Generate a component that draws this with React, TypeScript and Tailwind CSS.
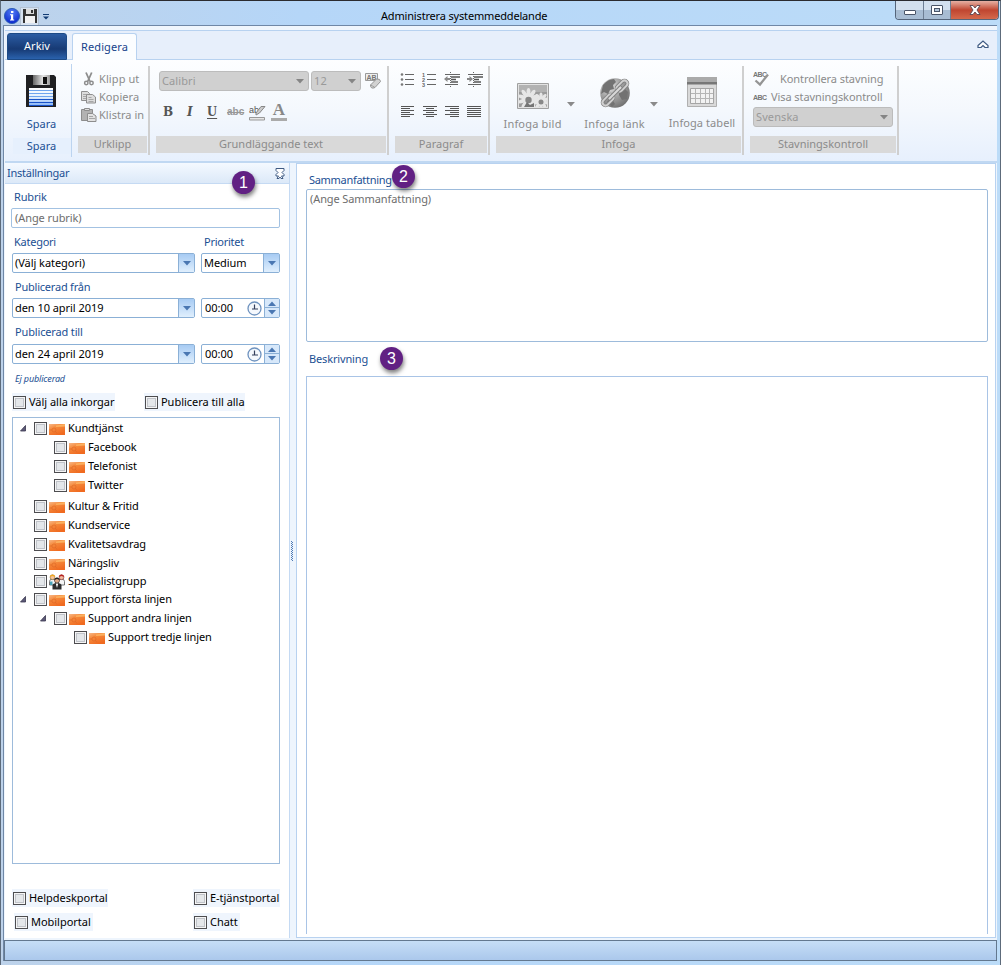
import React from 'react';
import clsx from 'clsx';

const FloppyIcon = ({ className }: { className: string }) => (
  <svg viewBox="0 0 30 32" className={className}>
    <defs>
      <linearGradient id="paper" x1="0" y1="0" x2="0" y2="1">
        <stop offset="0" stopColor="#fff" />
        <stop offset="0.5" stopColor="#e4effd" />
        <stop offset="1" stopColor="#7fb0f5" />
      </linearGradient>
      <linearGradient id="shutter" x1="0" x2="1">
        <stop offset="0" stopColor="#666" />
        <stop offset="0.6" stopColor="#e8e8e8" />
        <stop offset="1" stopColor="#999" />
      </linearGradient>
    </defs>
    <path d="M0 0h28l2 2v30H0z" fill="#202022" />
    <path d="M7 0h17v10H7z" fill="url(#shutter)" />
    <path d="M17 2h4v7h-4z" fill="#111" />
    <path d="M3 13h24v18H3z" fill="url(#paper)" />
    <path d="M3 15.500h24M3 18.500h24M3 21.500h24" stroke="#6fa4ee" />
    <path d="M3 24.500h24M3 27.500h24M3 30.500h24" stroke="#1953c9" />
  </svg>
);

const FloppySmall = () => (
  <svg viewBox="0 0 14 14" className="h-[14px] w-[14px]">
    <path d="M0 0h14v14H0z" fill="#333" />
    <path d="M3 0h8v5H3z" fill="#ddd" />
    <path d="M8 1h2v3H8z" fill="#333" />
    <path d="M2 7h10v7H2z" fill="#f2f2f2" />
  </svg>
);

const InfoIcon = () => (
  <svg viewBox="0 0 16 16" className="h-4 w-4">
    <defs>
      <radialGradient id="info" cx="0.5" cy="0.25" r="0.8">
        <stop offset="0" stopColor="#4f7cf5" />
        <stop offset="1" stopColor="#0620c9" />
      </radialGradient>
    </defs>
    <circle cx="8" cy="8" r="7.6" fill="url(#info)" stroke="#3161b8" />
    <path d="M7 3h2.4v2H7zM6 6.3h3.2v5.3h1v1H6v-1h1V7.3H6z" fill="#fff" />
  </svg>
);

const ScissorsIcon = () => (
  <svg viewBox="0 0 12 14" className="h-[14px] w-3" fill="none" stroke="#8d8d8d">
    <path d="M3 0.500l4 9M8.700 0.500L4.700 9.500" strokeWidth="1.800" />
    <circle cx="3.300" cy="11" r="1.700" strokeWidth="1.500" />
    <circle cx="8.500" cy="11" r="1.700" strokeWidth="1.500" />
  </svg>
);

const CopyIcon = () => (
  <svg viewBox="0 0 16 14" className="h-[14px] w-4" fill="#dcdcdc" stroke="#8f8f8f">
    <path d="M0.500 1.500h6l2 2v7h-8z" />
    <path d="M2 4.500h4M2 6.500h4M2 8.500h4" strokeWidth="0.700" />
    <path d="M5.500 4.500h6l3 2.500v6h-9z" />
    <path d="M7.500 7.500h3M7.500 9.500h5M7.500 11.500h5" strokeWidth="0.700" />
  </svg>
);

const PasteIcon = () => (
  <svg viewBox="0 0 16 14" className="h-[14px] w-4" fill="#b2b2b2" stroke="#8d8d8d">
    <path d="M0.500 1.500h11v11h-11z" />
    <path d="M3.500 0.500h5v2h-5z" fill="#ddd" />
    <path d="M6.500 5.500h5l3.500 2.500v5.500h-8.500z" fill="#e2e2e2" />
    <path d="M8 8.500h4M8 10.500h6" strokeWidth="0.700" />
  </svg>
);

const Arrow = ({ className }: { className?: string }) => (
  <svg viewBox="0 0 8 5" className={clsx('h-[5px] w-2', className)}>
    <path d="M0 0h8L4 4.600z" fill="currentColor" />
  </svg>
);

const ClearFormatIcon = () => (
  <svg viewBox="0 0 16 17" className="h-[17px] w-4">
    <path d="M0.500 0.500h12v7h-12z" fill="#eee" stroke="#9a9a9a" />
    <text x="1.500" y="6.500" fontSize="7" fontWeight="bold" fill="#777" textLength="10" fontFamily="Liberation Sans">AB</text>
    <path d="M5.500 12l6-6q4-0.500 4 2.500l-5.500 6q-4.500 2-4.500-2.500z" fill="#d2d2d2" stroke="#959595" />
    <path d="M5.500 12l4 2" stroke="#959595" strokeWidth="0.800" />
  </svg>
);

const HighlightIcon = () => (
  <svg viewBox="0 0 17 17" className="h-[17px] w-[17px] overflow-visible">
    <text x="0" y="8.500" fontSize="9" fill="#555" fontFamily="Liberation Sans">ab</text>
    <path d="M7 9l5-6.500h4L10.500 9 7 11z" fill="#ccc" stroke="#888" />
    <path d="M0.500 13.500h15v2.500h-15z" fill="#e6e6e6" stroke="#999" />
  </svg>
);

const bulletRows = [3, 8, 13];

const ListIcon = ({ numbered }: { numbered?: boolean }) => (
  <svg viewBox="0 0 15 16" className="h-4 w-[15px]">
    {bulletRows.map((y, i) => (
      <g key={y}>
        {numbered ? (
          <text x="0" y={y + 1.5} fontSize="5.500" fontWeight="bold" fill="#666" fontFamily="Liberation Sans">{i + 1}</text>
        ) : (
          <circle cx="2" cy={y - 0.5} r="1.300" fill="#777" />
        )}
        <path d={`M5 ${y - 0.5}h9`} stroke="#666" />
      </g>
    ))}
  </svg>
);

const IndentIcon = ({ right }: { right?: boolean }) => (
  <svg viewBox="0 0 16 16" className="h-4 w-4">
    <path d="M1 2.500h15M1 12.500h5M7 12.500h7" stroke="#666" />
    <path d="M7 5h9M7 7.500h5M7 10h7" stroke="#555" strokeWidth="1.400" />
    <path d="M6.500 0v15" stroke="#666" strokeDasharray="1 1" />
    <path d={right ? 'M6 7L2.500 4v2H0v2h2.500v2z' : 'M0 7l3.500-3v2H6v2H3.500v2z'} fill="#888" />
  </svg>
);

const alignPaths = {
  left: 'M0 1.500h13M0 3.500h9M0 5.500h13M0 7.500h9M0 9.500h13M0 11.500h9',
  center: 'M0 1.500h14M3 3.500h8M0 5.500h14M3 7.500h8M0 9.500h14M3 11.500h8',
  right: 'M0 1.500h14M5 3.500h9M0 5.500h14M5 7.500h9M0 9.500h14M5 11.500h9',
  justify: 'M0 1.500h14M0 3.500h14M0 5.500h14M0 7.500h14M0 9.500h14M0 11.500h14',
};

const AlignIcon = ({ type }: { type: keyof typeof alignPaths }) => (
  <svg viewBox="0 0 14 13" className="h-[13px] w-[14px]">
    <path d={alignPaths[type]} stroke="#555" />
  </svg>
);

const petals = [0, 36, 72, 108, 144, 180, 216, 252, 288, 324];

const PictureIcon = () => (
  <svg viewBox="0 0 32 27" className="h-[27px] w-8">
    <path d="M0.500 0.500h31v25h-31z" fill="#e2e2e2" stroke="#a0a0a0" />
    <svg x="2" y="2" width="28" height="22" viewBox="2 2 28 22">
      <path d="M2 2h28v22H2z" fill="#9b9b9b" />
      <path d="M2 2h28v7H2z" fill="#b2b2b2" />
      <g fill="#e6e6e6">
        {petals.map((a) => (
          <ellipse key={a} cx="11.500" cy="10" rx="2" ry="5" transform={`rotate(${a} 11.500 16)`} />
        ))}
        {petals.map((a) => (
          <ellipse key={a} cx="24" cy="13.500" rx="1.700" ry="4" transform={`rotate(${a} 24 18)`} />
        ))}
      </g>
      <circle cx="11.500" cy="17" r="3.200" fill="#858585" />
      <circle cx="24" cy="19" r="2.500" fill="#888" />
      <path d="M7 24l3-5 3 3 4-2v4z" fill="#757575" />
    </svg>
  </svg>
);

const GlobeLinkIcon = () => (
  <svg viewBox="0 0 32 32" className="h-8 w-8">
    <defs>
      <radialGradient id="globe" cx="0.35" cy="0.3" r="0.8">
        <stop offset="0" stopColor="#ddd" />
        <stop offset="0.5" stopColor="#a0a0a0" />
        <stop offset="1" stopColor="#6a6a6a" />
      </radialGradient>
    </defs>
    <circle cx="16" cy="16" r="14.800" fill="url(#globe)" />
    <path d="M4 8q5-6 11-6l2 3-3 3 1 4-4 1-2 4-4-2-3 2zM20 14l5-3 4 4-1 7-5 1-3-5zM8 24l5-2 3 5-3 3z" fill="#727272" />
    <g fill="none" strokeLinecap="round">
      <rect x="16.500" y="6" width="13" height="6" rx="3" stroke="#808080" strokeWidth="3.600" transform="rotate(-45 23 9)" />
      <rect x="2.500" y="20" width="13" height="6" rx="3" stroke="#808080" strokeWidth="3.600" transform="rotate(-45 9 23)" />
      <rect x="16.500" y="6" width="13" height="6" rx="3" stroke="#d0d0d0" strokeWidth="2" transform="rotate(-45 23 9)" />
      <rect x="2.500" y="20" width="13" height="6" rx="3" stroke="#d0d0d0" strokeWidth="2" transform="rotate(-45 9 23)" />
      <path d="M10.500 21.500l11-11" stroke="#808080" strokeWidth="4" />
      <path d="M10.500 21.500l11-11" stroke="#d8d8d8" strokeWidth="2.200" />
    </g>
  </svg>
);

const TableIcon = () => (
  <svg viewBox="0 0 30 31" className="h-[31px] w-[30px]">
    <path d="M0.500 0.500h29v29h-29z" fill="#d9d9d9" stroke="#b0b0b0" />
    <path d="M0 0h30v5H0z" fill="#aaa" />
    <path d="M0 5h30v2.500H0z" fill="#777" />
    <path d="M3.500 11.500h23v15h-23z" fill="#f2f2f2" stroke="#a5a5a5" />
    <path d="M4 16.500h22M4 21.500h22M8.500 12v14M13.500 12v14M18.500 12v14M22.500 12v14" stroke="#b5b5b5" />
  </svg>
);

const SpellIcon = ({ check }: { check?: boolean }) => (
  <svg viewBox="0 0 18 16" className="h-4 w-[18px]">
    <text x="0" y={check ? 6 : 11} fontSize="7" fontWeight="bold" fill="#777" textLength="14" fontFamily="Liberation Sans">ABC</text>
    {check && <path d="M2.500 9.500l4.500 4L15 3.500" stroke="#949494" strokeWidth="2.300" fill="none" />}
  </svg>
);

const FolderIcon = () => (
  <svg viewBox="0 0 16 12" className="h-3 w-4">
    <defs>
      <linearGradient id="folder" x1="0" y1="0" x2="0.6" y2="1">
        <stop offset="0" stopColor="#f8b888" />
        <stop offset="0.4" stopColor="#f58a3c" />
        <stop offset="1" stopColor="#f06a20" />
      </linearGradient>
    </defs>
    <path d="M0 1h16v11H0z" fill="url(#folder)" />
    <path d="M7 2.500L16 1v2.500L7 4z" fill="#fbb060" />
    <circle cx="5" cy="7" r="2" fill="none" stroke="#dc6426" strokeWidth="0.600" />
    <path d="M0.500 7h2.500M6.500 8.500l1.500 2" stroke="#dc6426" strokeWidth="0.600" />
  </svg>
);

const GroupIcon = () => (
  <svg viewBox="0 0 16 16" className="h-4 w-4">
    <path d="M0.500 11V7.500q0-2.500 3-2.500t3 2.500V11zM9.500 11V7.500q0-2.500 3-2.500t3 2.500V11z" fill="#f6f6f6" stroke="#555" strokeWidth="0.800" />
    <path d="M1 7.500h2.500V11H1z" fill="#4ba3b8" />
    <circle cx="3.500" cy="3.200" r="2.400" fill="#f4c49c" stroke="#8a6a30" strokeWidth="0.600" />
    <path d="M0.800 3Q1 0.500 3.500 0.500T6.200 3L3.500 2z" fill="#f2a81d" />
    <circle cx="12.500" cy="3.200" r="2.400" fill="#f0b8a0" stroke="#8a2a20" strokeWidth="0.600" />
    <path d="M9.800 3Q10 0.500 12.500 0.500T15.200 3l-2.700-1z" fill="#b82222" />
    <path d="M3.500 15.500v-4q0-2.500 4.500-2.500t4.500 2.500v4z" fill="#2c2c2c" />
    <path d="M6.800 9.500h2.400L8 14z" fill="#fff" />
    <circle cx="8" cy="6.500" r="2.500" fill="#e0a884" stroke="#222" strokeWidth="0.600" />
    <path d="M5.300 6Q5.500 3.500 8 3.500t2.700 2.500L8 5z" fill="#222" />
  </svg>
);

const ClockIcon = () => (
  <svg viewBox="0 0 15 15" className="h-[15px] w-[15px]">
    <circle cx="7.500" cy="7.500" r="6.500" fill="#f4f8fd" stroke="#6f93bf" strokeWidth="1.300" />
    <path d="M7.500 3.500v4.500M5 8h6" stroke="#333f5c" strokeWidth="1.200" fill="none" />
  </svg>
);

const Separator = () => <div className="mt-[6px] h-[89px] w-[2px] shrink-0 bg-[#cfcfcf]" />;

const Caption = ({ children }: { children: React.ReactNode }) => (
  <div className="mt-auto mb-[8px] flex h-[17px] items-center justify-center bg-[#d9d9d9] text-[11px] text-[#8b8b8b]">
    {children}
  </div>
);

const RibbonSelect = ({ children, className }: { children: React.ReactNode; className: string }) => (
  <div className={clsx('flex h-5 items-center justify-between rounded-[3px] border border-[#bcbcbc] bg-[#d0d0d0] pr-1 pl-[2px] text-[11px] tracking-[0.1px] text-[#999]', className)}>
    <span>{children}</span>
    <Arrow className="text-[#858585]" />
  </div>
);

const Label = ({ children, className }: { children: React.ReactNode; className?: string }) => (
  <div className={clsx('text-[11px] leading-4 text-[#1b4f93]', className)}>{children}</div>
);

const Select = ({ value, className }: { value: string; className: string }) => (
  <div className={clsx('flex h-5 items-center justify-between rounded-[2px] border border-[#8bb0d6] bg-white pl-[2px] text-[11px] tracking-[-0.05px] text-black', className)}>
    <span>{value}</span>
    <div className="flex h-full w-4 items-center justify-center border-l border-[#8bb0d6] bg-linear-to-b from-[#a7cbf3] to-[#e0effd]">
      <Arrow className="text-[#4a77b2]" />
    </div>
  </div>
);

const TimeField = () => (
  <div className="flex h-5 w-[79px] items-center rounded-[2px] border border-[#8bb0d6] bg-white pl-[3px] text-[11px] text-black">
    <span>00:00</span>
    <div className="ml-auto flex h-full items-center">
      <ClockIcon />
      <div className="ml-[2px] flex h-full w-[15px] flex-col border-l border-[#8bb0d6] bg-[#d7e8fa]">
        <div className="flex h-[9px] items-center justify-center border-b border-[#8bb0d6]">
          <Arrow className="rotate-180 text-[#4a77b2]" />
        </div>
        <div className="flex h-[9px] items-center justify-center">
          <Arrow className="text-[#4a77b2]" />
        </div>
      </div>
    </div>
  </div>
);

const Box = () => (
  <span className="flex h-[13px] w-[13px] shrink-0 items-center justify-center border border-[#4d4d50] bg-[#f5f5f5]">
    <span className="h-[9px] w-[9px] border border-[#c0c3c9] bg-[#e4e7ea]" />
  </span>
);

const Check = ({ label, className }: { label: string; className?: string }) => (
  <div className={clsx('flex h-[18px] items-center gap-[3px] bg-[#eff5fd] pl-px text-[11px] tracking-[-0.03px] text-black', className)}>
    <Box />
    <span className="whitespace-nowrap">{label}</span>
  </div>
);

interface TreeItem {
  label: string;
  level: number;
  open?: boolean;
  group?: boolean;
  height: string;
}

const tree: TreeItem[] = [
  { label: 'Kundtjänst', level: 0, open: true, height: 'h-[19px]' },
  { label: 'Facebook', level: 1, height: 'h-[19px]' },
  { label: 'Telefonist', level: 1, height: 'h-[19px]' },
  { label: 'Twitter', level: 1, height: 'h-[21px]' },
  { label: 'Kultur & Fritid', level: 0, height: 'h-[19px]' },
  { label: 'Kundservice', level: 0, height: 'h-[19px]' },
  { label: 'Kvalitetsavdrag', level: 0, height: 'h-[19px]' },
  { label: 'Näringsliv', level: 0, height: 'h-[18px]' },
  { label: 'Specialistgrupp', level: 0, group: true, height: 'h-[18px]' },
  { label: 'Support första linjen', level: 0, open: true, height: 'h-[19px]' },
  { label: 'Support andra linjen', level: 1, open: true, height: 'h-[19px]' },
  { label: 'Support tredje linjen', level: 2, height: 'h-[19px]' },
];

const indents = ['pl-[7px]', 'pl-[27px]', 'pl-[47px]'];

const TreeRow = ({ item }: { item: TreeItem }) => (
  <div className={clsx('flex items-start', item.height, indents[item.level])}>
    <div className="flex h-[19px] items-center">
      <svg viewBox="0 0 14 8" className="-mt-[2px] h-2 w-[14px]">
        {item.open && <path d="M0.500 7h5V1.500z" fill="#5d5a78" stroke="#38364e" strokeWidth="0.800" />}
      </svg>
      <Box />
      <span className="ml-[2px] flex w-4">{item.group ? <GroupIcon /> : <FolderIcon />}</span>
      <span className="-mt-[2px] ml-[3px] text-[11px] leading-[18px] tracking-[-0.1px] whitespace-nowrap">{item.label}</span>
    </div>
  </div>
);

const Badge = ({ n, className }: { n: number; className: string }) => (
  <div className={clsx('absolute flex h-[23px] w-[23px] items-center justify-center rounded-full bg-[#612083] font-["Liberation_Sans"] text-[16px] leading-none text-white shadow-[1px_3px_4px_rgba(0,0,0,0.5)]', className)}>
    {n}
  </div>
);

const TitleBar = () => (
  <div className="flex h-6 shrink-0 items-start">
    <div className="mt-[5px] flex h-5 items-center">
      <InfoIcon />
      <div className="flex h-[19px] w-[19px] items-center justify-center border border-[#b5c3d4] bg-[#d6e2f0]">
        <FloppySmall />
      </div>
      <svg viewBox="0 0 6 6" className="mt-[2px] ml-1 h-[6px] w-[6px]">
        <path d="M0 0.500h6" stroke="#123c74" />
        <path d="M0 2.500h6L3 5.500z" fill="#123c74" />
      </svg>
    </div>
    <div className="flex-1 pt-[7px] pl-[332px] text-[11px] leading-4 tracking-[-0.17px] text-black">Administrera systemmeddelande</div>
    <div className="-mr-[2px] flex h-[19px] overflow-hidden rounded-b-[4px] border border-t-0 border-[#55657a]">
      <div className="flex w-[28px] items-center justify-center border-r border-[#6e7f94] bg-linear-to-b from-[#d3e0ee] from-50% to-[#a8bdd3] to-50%">
        <div className="mt-[5px] h-[5px] w-3 rounded-[1px] border border-[#4a5568] bg-white" />
      </div>
      <div className="flex w-[27px] items-center justify-center border-r border-[#6e7f94] bg-linear-to-b from-[#d3e0ee] from-50% to-[#a8bdd3] to-50%">
        <div className="flex h-[10px] w-3 items-center justify-center rounded-[1px] border border-[#4a5568] bg-white">
          <div className="h-1 w-[6px] border border-[#4a5568] bg-[#b4c7da]" />
        </div>
      </div>
      <div className="flex w-[47px] items-center justify-center bg-linear-to-b from-[#e5b0a4] from-0% via-[#bf4530] via-50% to-[#d4694c]">
        <svg viewBox="0 0 12 10" className="h-[10px] w-3">
          <path d="M1 0.500h3l2 2.500 2-2.500h3L8 5l3 4.500H8L6 7 4 9.500H1L4 5z" fill="#fff" stroke="#5a4650" strokeWidth="0.900" />
        </svg>
      </div>
    </div>
  </div>
);

const Tabs = () => (
  <div className="flex h-[29px] shrink-0 items-end border-b border-[#b8d2f0] bg-[#e7effb] pl-[2px]">
    <div className="-mb-px flex h-[27px] w-[60px] items-center justify-center rounded-t-[3px] border border-[#1c4a86] bg-linear-to-b from-[#2b5ca3] via-[#173a74] via-60% to-[#2a62ad] text-[11px] text-white">
      Arkiv
    </div>
    <div className="-mb-px ml-[5px] flex h-[27px] w-[65px] items-center justify-center rounded-t-[3px] border border-b-0 border-[#b8d2f0] bg-[#fbfdff] text-[11px] tracking-[0.1px] text-[#15428b]">
      Redigera
    </div>
    <svg viewBox="0 0 12 8" className="mr-2 mb-[11px] ml-auto h-2 w-3">
      <path d="M1 5.500L6 1l5 4.500v2H8L6 5.500 4 7.500H1z" fill="#fff" stroke="#3f5a82" strokeWidth="1.200" />
    </svg>
  </div>
);

const Ribbon = () => (
  <div className="flex h-[103px] shrink-0 border-b-2 border-[#c0d8f2] bg-linear-to-b from-[#fdfeff] via-[#f4f8fd] via-50% to-[#e7f0fd] text-[11px] text-[#8b8b8b]">
    <div className="flex w-[66px] flex-col items-center text-[#1b4f93]">
      <FloppyIcon className="mt-[15px] ml-[6px] h-8 w-[30px]" />
      <span className="mt-[9px] ml-[7px] leading-4">Spara</span>
      <div className="mt-auto mb-[7px] ml-[7px] flex h-4 w-[58px] items-center justify-center bg-[#e6f0fd]">Spara</div>
    </div>
    <div className="mt-1 h-[93px] w-px shrink-0 bg-[#bcd4f0]" />

    <div className="flex w-[76px] flex-col pr-px pl-[6px]">
      <div className="mt-[10px] flex h-[54px] flex-col pl-[3px]">
        <div className="flex h-[18px] items-center gap-1 pl-[2px] tracking-[0.1px]"><ScissorsIcon /><span>Klipp ut</span></div>
        <div className="flex h-[18px] items-center gap-[2px] tracking-[0.05px]"><CopyIcon /><span>Kopiera</span></div>
        <div className="flex h-[18px] items-center gap-[2px] tracking-[0.05px] whitespace-nowrap"><PasteIcon /><span>Klistra in</span></div>
      </div>
      <Caption>Urklipp</Caption>
    </div>
    <Separator />

    <div className="flex w-[237px] flex-col pr-px pl-[6px]">
      <div className="mt-[11px] flex pl-[3px]">
        <RibbonSelect className="w-[150px]">Calibri</RibbonSelect>
        <RibbonSelect className="ml-[2px] w-[50px]">12</RibbonSelect>
        <div className="ml-1 pt-[2px]"><ClearFormatIcon /></div>
      </div>
      <div className="mt-3 flex h-[18px] items-center pl-[7px] font-['Liberation_Serif'] text-[15px] leading-none text-[#555]">
        <span className="w-[22px] font-['DejaVu_Serif'] text-[12px] font-bold">B</span>
        <span className="w-[22px] pl-[2px] font-['DejaVu_Serif'] text-[12px] font-bold italic">I</span>
        <span className="w-[20px] text-[14px] font-bold underline underline-offset-2">U</span>
        <span className="w-[22px] font-['Liberation_Sans'] text-[10px] font-bold text-[#999] line-through">abc</span>
        <span className="w-[22px]"><HighlightIcon /></span>
        <span className="flex h-[18px] w-4 items-end justify-center border-b-[3px] border-[#aaa] text-[17px] leading-[17px] font-bold text-[#888]">A</span>
      </div>
      <Caption>Grundläggande text</Caption>
    </div>
    <Separator />

    <div className="flex w-[99px] flex-col pr-px pl-[6px]">
      <div className="mt-[12px] flex gap-[7px] pl-[5px]">
        <ListIcon />
        <ListIcon numbered />
        <IndentIcon />
        <IndentIcon right />
      </div>
      <div className="mt-[17px] flex gap-2 pl-[6px]">
        <AlignIcon type="left" />
        <AlignIcon type="center" />
        <AlignIcon type="right" />
        <AlignIcon type="justify" />
      </div>
      <Caption>Paragraf</Caption>
    </div>
    <Separator />

    <div className="flex w-[252px] flex-col pr-px pl-[6px]">
      <div className="flex h-[76px] tracking-[0.2px] whitespace-nowrap">
        <div className="mt-[23px] flex w-[73px] flex-col items-center pl-px">
          <PictureIcon />
          <span className="mt-[6px] leading-4">Infoga bild</span>
        </div>
        <Arrow className="mt-[42px] -ml-px text-[#8a8a8a]" />
        <div className="mt-[17px] flex w-[76px] flex-col items-center pl-[4px]">
          <GlobeLinkIcon />
          <span className="mt-[7px] leading-4">Infoga länk</span>
        </div>
        <Arrow className="mt-[42px] text-[#8a8a8a]" />
        <div className="mt-[17px] flex w-[84px] flex-col items-center pl-[5px]">
          <TableIcon />
          <span className="mt-[7px] leading-4 tracking-[0.08px]">Infoga tabell</span>
        </div>
      </div>
      <Caption>Infoga</Caption>
    </div>
    <Separator />

    <div className="flex w-[153px] flex-col pr-px pl-[6px]">
      <div className="mt-[10px] ml-[3px] flex h-[18px] items-center gap-[9px] tracking-[-0.06px] whitespace-nowrap"><SpellIcon check /><span>Kontrollera stavning</span></div>
      <div className="ml-[3px] flex h-[18px] items-center tracking-[-0.08px] whitespace-nowrap"><SpellIcon /><span>Visa stavningskontroll</span></div>
      <RibbonSelect className="mt-px ml-[3px] w-[140px]">Svenska</RibbonSelect>
      <Caption>Stavningskontroll</Caption>
    </div>
    <Separator />
  </div>
);

const SettingsPanel = () => (
  <div className="relative flex w-[285px] shrink-0 flex-col border-r border-[#c5daf3] bg-white">
    <div className="flex h-[21px] shrink-0 items-center justify-between border-b border-[#c5daf3] bg-linear-to-b from-[#f4f9ff] to-[#dce9f8] pr-[4px] pl-[2px] text-[11px] tracking-[-0.25px] text-[#1b4f93]">
      <span>Inställningar</span>
      <svg viewBox="0 0 10 11" className="h-[11px] w-[10px]" fill="#fff" stroke="#3f5a82">
        <path d="M1 0.500h8v2L7 4.500l2 2V8H6.500L8 10.500H6L5 9l-1 1.500H2L3.500 8H1V6.500l2-2-2-2z" />
      </svg>
    </div>
    <Badge n={1} className="top-[8px] left-[227px]" />

    <div className="flex flex-1 flex-col pr-[9px] pl-[7px]">
      <Label className="mt-[5px] ml-[2px] tracking-[-0.15px]">Rubrik</Label>
      <div className="mt-[3px] -ml-px flex h-5 items-center rounded-[2px] border border-[#a3c2e2] pl-[3px] text-[11px] tracking-[-0.08px] text-[#6d6d6d]">
        (Ange rubrik)
      </div>
      <div className="mt-[6px] flex pl-[2px] tracking-[-0.25px]">
        <Label className="w-[190px]">Kategori</Label>
        <Label>Prioritet</Label>
      </div>
      <div className="mt-[3px] flex justify-between">
        <Select value="(Välj kategori)" className="w-[183px]" />
        <Select value="Medium" className="w-[79px]" />
      </div>
      <Label className="mt-[6px] ml-[3px] tracking-[-0.22px]">Publicerad från</Label>
      <div className="mt-[3px] flex justify-between">
        <Select value="den 10 april 2019" className="w-[183px]" />
        <TimeField />
      </div>
      <Label className="mt-[6px] ml-[3px] tracking-[-0.15px]">Publicerad till</Label>
      <div className="mt-1 flex justify-between">
        <Select value="den 24 april 2019" className="w-[183px]" />
        <TimeField />
      </div>
      <div className="mt-[7px] ml-[3px] text-[9px] leading-4 tracking-[-0.15px] text-[#1b4f93] italic">Ej publicerad</div>
      <div className="mt-[6px] flex">
        <Check label="Välj alla inkorgar" className="w-[103px]" />
        <Check label="Publicera till alla" className="ml-[29px] w-[101px]" />
      </div>
      <div className="mt-[6px] h-[447px] border border-[#9dbbdb] pt-px">
        {tree.map((item) => (
          <TreeRow key={item.label} item={item} />
        ))}
      </div>
      <div className="mt-[25px] flex justify-between">
        <Check label="Helpdeskportal" className="w-[96px]" />
        <Check label="E-tjänstportal" className="w-[87px]" />
      </div>
      <div className="mt-[6px] flex justify-between">
        <Check label="Mobilportal" className="ml-[2px] w-[79px]" />
        <Check label="Chatt" className="mr-10 w-[47px]" />
      </div>
    </div>
  </div>
);

const Splitter = () => (
  <div className="flex w-[6px] shrink-0 items-center bg-[#eef5fd]">
    <svg viewBox="0 0 3 20" className="h-5 w-[3px]">
      <path d="M1.500 0v20M2.500 1v19" stroke="#4f7bb5" strokeDasharray="1 1" />
    </svg>
  </div>
);

const Editor = () => (
  <div className="relative flex flex-1 flex-col border border-[#b8d2f0] bg-white pr-[7px] pl-[9px]">
    <Label className="mt-2 ml-[3px] tracking-[-0.3px]">Sammanfattning</Label>
    <Badge n={2} className="top-px left-[95px]" />
    <div className="mt-px h-[153px] shrink-0 rounded-[2px] border border-[#9dbbdb] pl-[3px] text-[11px] leading-[18px] tracking-[-0.1px] text-[#6d6d6d]">
      (Ange Sammanfattning)
    </div>
    <Label className="mt-[9px] ml-[3px] tracking-[-0.15px]">Beskrivning</Label>
    <Badge n={3} className="top-[183px] left-[83px]" />
    <div className="mt-[9px] mb-[3px] flex-1 border border-b-0 border-[#a9c4e6]" />
  </div>
);

const App = () => {
  return (
    <div className="flex h-[965px] w-[1001px] flex-col border-t border-r border-l border-[#5d6b7b] border-t-[#2b2b2f] bg-[#bcd5ef] bg-linear-to-r from-[#bdd2ea] via-[#b5d6f8] via-30% to-[#bcdcf8] pr-[3px] pb-1 pl-[2px] font-['Noto_Sans','Open_Sans',sans-serif]">
      <div className="pl-px">
        <TitleBar />
      </div>
      <div className="flex min-h-0 flex-1 flex-col border-t border-l border-[#6f87a6] bg-[#eef5fd] pl-px">
        <div className="h-[5px] shrink-0 border-b border-[#b8d2f0] bg-[#f0f6fd]" />
        <Tabs />
        <Ribbon />
        <div className="flex min-h-0 flex-1 pr-px pb-[2px]">
          <SettingsPanel />
          <Splitter />
          <Editor />
        </div>
        <div className="-ml-px h-[21px] shrink-0 border border-[#63788f] bg-linear-to-b from-[#c6def6] to-[#abc8ec]" />
      </div>
    </div>
  );
};

export default App;
